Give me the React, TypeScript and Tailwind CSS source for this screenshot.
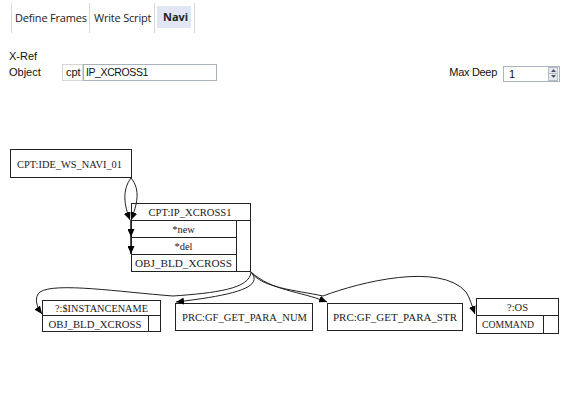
import React from "react";

const serif = { fontFamily: '"Liberation Serif", "Times New Roman", serif' };

function T({ x, y, w, children }: { x: number; y: number; w?: number; children: string }) {
  return (
    <text
      x={x}
      y={y}
      textAnchor="middle"
      fontSize={10.5}
      textLength={w}
      lengthAdjust={w ? "spacingAndGlyphs" : undefined}
      fill="#1a1a1a"
      style={serif}
    >
      {children}
    </text>
  );
}

function Diagram() {
  const s = "#222";
  return (
    <svg width={583} height={314} viewBox="0 81 583 314" className="block">
      <defs>
        <marker
          id="ah"
          markerUnits="userSpaceOnUse"
          markerWidth={9}
          markerHeight={7}
          refX={8}
          refY={3.5}
          orient="auto"
        >
          <path d="M0,0 L8,3.5 L0,7 z" fill="#000" />
        </marker>
      </defs>
      <g fill="none" stroke={s} strokeWidth={1}>
        <rect x={10.5} y={149.5} width={121} height={28} />
        <rect x={131.5} y={203.5} width={119} height={68} />
        <line x1={131.5} y1={220.5} x2={250.5} y2={220.5} />
        <line x1={131.5} y1={237.5} x2={236.5} y2={237.5} />
        <line x1={131.5} y1={254.5} x2={236.5} y2={254.5} />
        <line x1={236.5} y1={220.5} x2={236.5} y2={271.5} />
        <rect x={42.5} y={300.5} width={118} height={31} />
        <line x1={42.5} y1={315.5} x2={160.5} y2={315.5} />
        <line x1={148.5} y1={315.5} x2={148.5} y2={331.5} />
        <rect x={175.5} y={303.5} width={137} height={27} />
        <rect x={327.5} y={303.5} width={135} height={27} />
        <rect x={476.5} y={298.5} width={82} height={35} />
        <line x1={476.5} y1={315.5} x2={558.5} y2={315.5} />
        <line x1={543.5} y1={315.5} x2={543.5} y2={333.5} />

        <path d="M131,178 C141,190 137,205 131,220" markerEnd="url(#ah)" />
        <path d="M131,178 C122,190 124,205 130,220" markerEnd="url(#ah)" />
        <path d="M131,220 L131,237" strokeWidth={1.6} markerEnd="url(#ah)" />
        <path d="M131,237 L131,254" strokeWidth={1.6} markerEnd="url(#ah)" />

        <path
          d="M251,272 C250,289 215,293 173,296 C120,292 55,282 40,292 C34,297 36,306 42,314"
          markerEnd="url(#ah)"
        />
        <path d="M251,272 C264,287 236,295 176,302" markerEnd="url(#ah)" />
        <path d="M251,272 C272,291 300,291 327,302" markerEnd="url(#ah)" />
        <path
          d="M251,272 C262,288 295,290 323,296 C360,282 440,262 466,292 C470,298 472,306 475,314"
          markerEnd="url(#ah)"
        />
      </g>

      <T x={69.5} y={167.5} w={105}>CPT:IDE_WS_NAVI_01</T>
      <T x={190} y={215.5} w={83}>CPT:IP_XCROSS1</T>
      <T x={183.5} y={232.5}>*new</T>
      <T x={183.5} y={249.5}>*del</T>
      <T x={183.5} y={266.5} w={97}>OBJ_BLD_XCROSS</T>
      <T x={101.5} y={312} w={93}>?:$INSTANCENAME</T>
      <T x={95} y={327.5} w={93}>OBJ_BLD_XCROSS</T>
      <T x={244.5} y={320.5} w={125}>PRC:GF_GET_PARA_NUM</T>
      <T x={395} y={320.5} w={124}>PRC:GF_GET_PARA_STR</T>
      <T x={517.5} y={311}>?:OS</T>
      <T x={508} y={328} w={52}>COMMAND</T>
    </svg>
  );
}

export default function App() {
  const ui = { fontFamily: '"Liberation Sans", Arial, sans-serif' };
  const tab = { fontFamily: '"Open Sans", "Noto Sans", sans-serif' };
  return (
    <div className="w-[583px] h-[395px] bg-white overflow-hidden text-[#111]">
      <div className="h-[36px] flex items-start pl-[11px] text-[11px] text-[#222]" style={tab}>
        <div className="w-px h-[30px] mt-[3px] bg-[#d9d9d9]" />
        <div className="w-[77px] h-[30px] mt-[3px] flex items-center pl-[3px] tracking-[-0.2px]">Define Frames</div>
        <div className="w-px h-[30px] mt-[3px] bg-[#d9d9d9]" />
        <div className="w-[64px] h-[30px] mt-[3px] flex items-center pl-[4px] tracking-[-0.2px]">Write Script</div>
        <div className="w-px h-[30px] mt-[3px] bg-[#d9d9d9]" />
        <div className="w-[39px] h-[30px] mt-[3px] pl-[2px]">
          <div className="w-[34px] h-[22px] mt-[3px] bg-[#e0e6f3] flex items-center pl-[6px] font-bold">Navi</div>
        </div>
        <div className="w-px h-[30px] mt-[3px] bg-[#d9d9d9]" />
      </div>

      <div style={ui} className="text-[11px]">
        <div className="mt-[14px] h-[13px] leading-[13px] pl-[9px]">X-Ref</div>
        <div className="mt-[1px] h-[17px] flex items-center pl-[9px] pr-[23px]">
          <div className="w-[53px] leading-[13px]">Object</div>
          <div className="w-[21px] h-[17px] border border-[#d4d4d4] flex items-center pl-[3px] leading-[13px]">
            cpt
          </div>
          <div className="w-[134px] h-[17px] border border-[#abb2bf] flex items-center pl-[2px] leading-[13px] tracking-[-0.4px] text-[10.5px]">
            IP_XCROSS1
          </div>
          <div className="ml-auto leading-[13px] tracking-[-0.3px]">Max Deep</div>
          <div className="ml-[6px] w-[57px] h-[16px] mt-[2px] border border-[#abb2bf] flex">
            <div className="flex-1 pl-[5px] leading-[14px]">1</div>
            <div className="w-[10px] mr-px flex flex-col">
              <div className="flex-1 bg-[#e6e9ee] border border-[#b6bcc6] flex items-center justify-center">
                <svg width="5" height="3" viewBox="0 0 5 3">
                  <path d="M0,3 L2.5,0 L5,3 z" fill="#4a5566" />
                </svg>
              </div>
              <div className="flex-1 bg-[#e6e9ee] border border-t-0 border-[#b6bcc6] flex items-center justify-center">
                <svg width="5" height="3" viewBox="0 0 5 3">
                  <path d="M0,0 L2.5,3 L5,0 z" fill="#4a5566" />
                </svg>
              </div>
            </div>
          </div>
        </div>
      </div>

      <Diagram />
    </div>
  );
}
